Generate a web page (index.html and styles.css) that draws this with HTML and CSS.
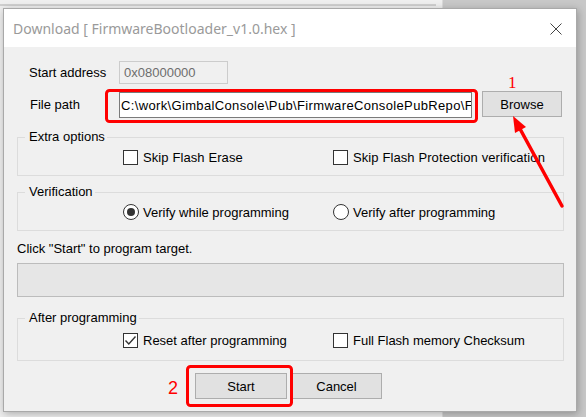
FILE: index.html
```html
<!DOCTYPE html>
<html>
<head>
<meta charset="utf-8">
<title>Download</title>
<link rel="stylesheet" href="styles.css">
</head>
<body>
<div class="desk-back"><div class="desk-strip"></div></div>
<div class="window">
  <div class="titlebar">
    <span class="title">Download [ FirmwareBootloader_v1.0.hex ]</span>
    <svg class="close" width="12" height="12" viewBox="0 0 12 12"><path d="M0.5 0.5L11.5 11.5M11.5 0.5L0.5 11.5" stroke="#444" stroke-width="1" fill="none"/></svg>
  </div>
  <div class="content">
    <div class="row row-addr">
      <span class="lbl">Start address</span>
      <div class="tb tb-disabled">0x08000000</div>
    </div>
    <div class="row row-path">
      <span class="lbl lbl-path">File path</span>
      <div class="tb tb-path">C:\work\GimbalConsole\Pub\FirmwareConsolePubRepo\F</div>
      <div class="btn btn-browse">Browse</div>
    </div>
    <fieldset class="grp grp-extra">
      <legend>Extra options</legend>
      <div class="opts">
        <div class="opt"><span class="cb"></span><span>Skip Flash Erase</span></div>
        <div class="opt"><span class="cb"></span><span>Skip Flash Protection verification</span></div>
      </div>
    </fieldset>
    <fieldset class="grp grp-verify">
      <legend>Verification</legend>
      <div class="opts opts-radio">
        <div class="opt opt-radio"><span class="rb rb-on"></span><span>Verify while programming</span></div>
        <div class="opt opt-radio"><span class="rb"></span><span>Verify after programming</span></div>
      </div>
    </fieldset>
    <div class="hint">Click "Start" to program target.</div>
    <div class="progress"></div>
    <fieldset class="grp grp-after">
      <legend>After programming</legend>
      <div class="opts opts-after">
        <div class="opt opt-tight"><span class="cb"><svg width="13" height="13" viewBox="0 0 13 13"><path d="M1.5 6.5L4.8 10L11.5 2.5" stroke="#333" stroke-width="1.4" fill="none"/></svg></span><span>Reset after programming</span></div>
        <div class="opt opt-tight"><span class="cb"></span><span>Full Flash memory Checksum</span></div>
      </div>
    </fieldset>
    <div class="buttons">
      <div class="btn btn-start">Start</div>
      <div class="btn btn-cancel">Cancel</div>
    </div>
  </div>
</div>
<svg class="annot" width="586" height="417" viewBox="0 0 586 417">
  <rect x="106.5" y="90.5" width="370" height="31" rx="3" ry="3" fill="none" stroke="#ff0000" stroke-width="3"/>
  <rect x="187.5" y="366.5" width="104" height="39" rx="3" ry="3" fill="none" stroke="#ff0000" stroke-width="3"/>
  <line x1="562" y1="206" x2="519" y2="127" stroke="#ff0000" stroke-width="3.5" stroke-linecap="round"/>
  <polygon points="513,116 526,127 515,133" fill="#ff0000"/>
</svg>
<span class="num num1">1</span>
<span class="num num2">2</span>
</body>
</html>
```

FILE: styles.css
```css
* { box-sizing: border-box; }
html, body { margin: 0; padding: 0; }
body {
  width: 586px;
  height: 417px;
  overflow: hidden;
  position: relative;
  background: #c8c8c8;
  font-family: "Liberation Sans", Arial, sans-serif;
  font-size: 13px;
  color: #000;
}
.desk-back {
  position: absolute;
  left: 0;
  top: 0;
  width: 443px;
  height: 417px;
  background: #efefef;
  border-right: 1px solid #dadada;
}
.desk-strip {
  height: 6px;
  width: 436px;
  border-bottom: 2px solid #cfcfcf;
}
.window {
  position: absolute;
  left: 3px;
  top: 8px;
  width: 574px;
  height: 404px;
  background: #f0f0f0;
  border: 1px solid #a9a9a9;
  box-shadow: 1px 2px 8px rgba(0, 0, 0, 0.28);
  display: flex;
  flex-direction: column;
}
.titlebar {
  height: 38px;
  flex: none;
  background: #fff;
  display: flex;
  align-items: center;
  justify-content: space-between;
  padding: 0 14px 0 9px;
}
.title {
  font-family: "Noto Sans", "Open Sans", sans-serif;
  font-size: 14px;
  color: #9a9a9a;
  white-space: nowrap;
  margin-top: 1px;
}
.close { display: block; margin-top: 1px; }
.content {
  flex: 1;
  padding: 0 12px 0 13px;
}
.row { display: flex; align-items: center; }
.row-addr { margin-top: 14px; height: 23px; padding-left: 12px; }
.lbl { width: 90px; flex: none; }
.lbl-path { padding-left: 1px; }
.tb {
  height: 23px;
  border: 1px solid #7a7a7a;
  background: #fff;
  display: flex;
  align-items: center;
  white-space: nowrap;
  overflow: hidden;
  flex: none;
}
.tb-disabled {
  width: 109px;
  background: #f0f0f0;
  border-color: #cccccc;
  color: #6d6d6d;
  padding-left: 4px;
}
.row-path { margin-top: 7px; height: 27px; padding-left: 12px; align-items: flex-start; }
.row-path .lbl { align-self: center; }
.tb-path { width: 353px; height: 26px; margin-top: 1px; padding-left: 1px; letter-spacing: 0.35px; }
.btn {
  background: #e1e1e1;
  border: 1px solid #adadad;
  display: flex;
  align-items: center;
  justify-content: center;
  flex: none;
}
.btn-browse { width: 80px; height: 26px; margin-left: 10px; }
.grp {
  margin: 0;
  padding: 0;
  border: 1px solid #dcdcdc;
  min-width: 0;
}
.grp legend {
  margin-left: 7px;
  padding: 0 2px 0 4px;
  line-height: 16px;
  height: 16px;
}
.grp-extra { margin-top: 11px; }
.grp-verify { margin-top: 8px; }
.grp-after { margin-top: 13px; }
.opts {
  display: grid;
  grid-template-columns: 210px auto;
  padding-left: 105px;
  height: 15px;
  margin: 5px 0 10px;
}
.opts-radio { height: 16px; margin: 4px 0 10px; }
.opts-after { margin: 7px 0 12px; }
.opt { display: flex; align-items: center; gap: 5px; white-space: nowrap; letter-spacing: 0.1px; }
.opt-radio { gap: 4px; letter-spacing: 0; }
.opt-tight { letter-spacing: 0; }
.cb {
  width: 15px;
  height: 15px;
  border: 1px solid #333;
  background: #fff;
  flex: none;
  display: flex;
  align-items: center;
  justify-content: center;
}
.cb svg { display: block; }
.rb {
  width: 16px;
  height: 16px;
  border: 1px solid #333;
  border-radius: 50%;
  background: #fff;
  flex: none;
  display: flex;
  align-items: center;
  justify-content: center;
}
.rb-on::after {
  content: "";
  width: 8px;
  height: 8px;
  border-radius: 50%;
  background: #333;
}
.hint { margin-top: 10px; line-height: 16px; height: 16px; }
.progress {
  margin-top: 6px;
  height: 34px;
  border: 1px solid #bcbcbc;
  background: #e6e6e6;
}
.buttons {
  display: flex;
  gap: 4px;
  margin-top: 12px;
  padding-left: 178px;
}
.btn-start { width: 92px; height: 26px; }
.btn-cancel { width: 91px; height: 26px; }
.annot {
  position: absolute;
  left: 0;
  top: 0;
  pointer-events: none;
}
.num {
  position: absolute;
  color: #ff0000;
  line-height: 1;
}
.num1 {
  left: 508px;
  top: 74px;
  font-family: "Liberation Serif", serif;
  font-size: 17px;
}
.num2 {
  left: 168px;
  top: 379px;
  font-family: "Liberation Sans", sans-serif;
  font-size: 18px;
}
```
